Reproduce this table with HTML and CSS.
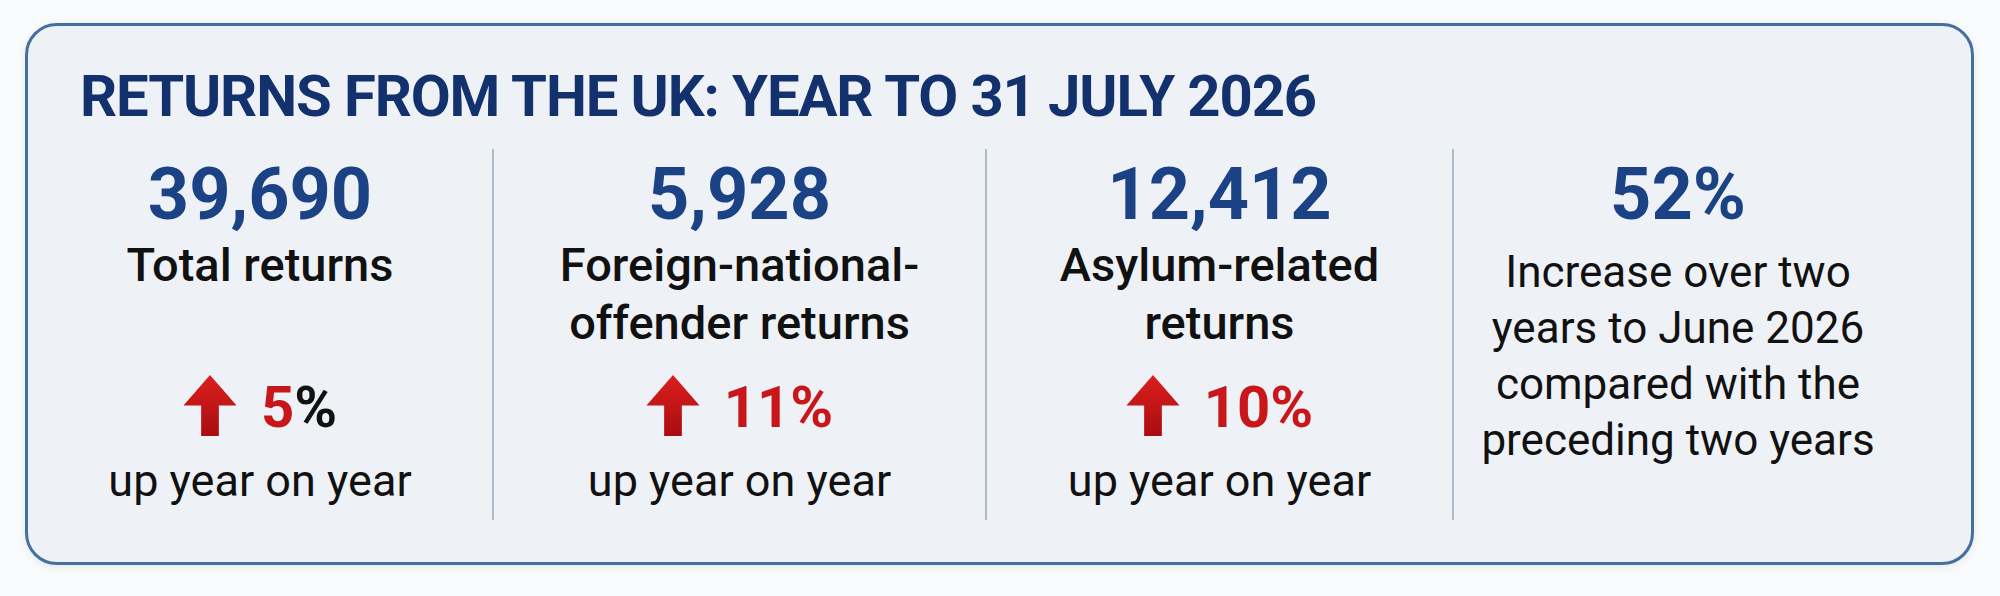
FILE: index.html
```html
<!DOCTYPE html>
<html lang="en">
<head>
<meta charset="utf-8">
<title>Returns from the UK</title>
<link rel="stylesheet" href="styles.css">
</head>
<body>
<section class="card">
  <h1 class="title">RETURNS FROM THE UK: YEAR TO 31 JULY 2026</h1>
  <div class="stats">
    <div class="stat stat-1">
      <div class="figure">39,690</div>
      <div class="label">Total returns</div>
      <div class="change">
        <svg class="arrow" viewBox="0 0 54 62" aria-hidden="true"><use href="#up"/></svg>
        <span class="pct"><span class="red">5</span>%</span>
      </div>
      <div class="note">up year on year</div>
    </div>
    <div class="stat stat-2">
      <div class="figure">5,928</div>
      <div class="label">Foreign-national-<br>offender returns</div>
      <div class="change">
        <svg class="arrow" viewBox="0 0 54 62" aria-hidden="true"><use href="#up"/></svg>
        <span class="pct red">11%</span>
      </div>
      <div class="note">up year on year</div>
    </div>
    <div class="stat stat-3">
      <div class="figure">12,412</div>
      <div class="label">Asylum-related<br>returns</div>
      <div class="change">
        <svg class="arrow" viewBox="0 0 54 62" aria-hidden="true"><use href="#up"/></svg>
        <span class="pct red">10%</span>
      </div>
      <div class="note">up year on year</div>
    </div>
    <div class="stat stat-4">
      <div class="figure">52%</div>
      <div class="desc">Increase over two<br>years to June 2026<br>compared with the<br>preceding two years</div>
    </div>
  </div>
</section>
<svg width="0" height="0" class="defs" aria-hidden="true">
  <defs>
    <linearGradient id="redgrad" x1="0" y1="0" x2="0" y2="1">
      <stop offset="0" stop-color="#dc1f1f"/>
      <stop offset="1" stop-color="#a90d0f"/>
    </linearGradient>
    <symbol id="up" viewBox="0 0 54 62">
      <polygon points="27,0 54,31 36,31 36,62 18,62 18,31 0,31" fill="url(#redgrad)"/>
    </symbol>
  </defs>
</svg>
</body>
</html>
```

FILE: styles.css
```css
html, body {
  margin: 0;
  padding: 0;
}

body {
  background: #fafbfc;
  font-family: Roboto, "Liberation Sans", Arial, sans-serif;
  color: #121212;
  width: 2000px;
  height: 596px;
  overflow: hidden;
}

.defs {
  position: absolute;
  width: 0;
  height: 0;
}

.card {
  margin: 23px 26px 0 25px;
  border: 3px solid #44709f;
  border-radius: 32px;
  background: #eef2f7;
  box-shadow: 0 2px 8px rgba(40, 60, 90, 0.10);
  padding: 41px 59px 42px 0;
}

.title {
  margin: 0 0 0 52px;
  font-size: 58px;
  line-height: 59px;
  font-weight: 700;
  color: #13316d;
  letter-spacing: -1.1px;
  white-space: nowrap;
}

.stats {
  margin-top: 23px;
  display: grid;
  grid-template-columns: 464px 493px 467px 1fr;
}

.stat {
  display: flex;
  flex-direction: column;
  align-items: center;
  text-align: center;
  padding: 10px 0 14px;
}

.stat + .stat {
  border-left: 2px solid #aebbcb;
}

.stat-4 {
  padding-right: 10px;
}

.figure {
  font-size: 72px;
  line-height: 72px;
  font-weight: 700;
  color: #1a4284;
}

.label {
  margin-top: 5px;
  font-size: 47px;
  line-height: 58px;
  font-weight: 500;
  height: 116px;
  color: #111;
}

.change {
  margin-top: 23px;
  height: 61px;
  display: flex;
  align-items: center;
  gap: 24px;
}

.arrow {
  width: 54px;
  height: 61px;
  display: block;
}

.pct {
  font-size: 58px;
  line-height: 61px;
  font-weight: 700;
  color: #111;
  padding-top: 4px;
}

.red {
  color: #c8161b;
}

.note {
  margin-top: 20px;
  font-size: 45px;
  line-height: 50px;
  font-weight: 400;
  color: #111;
}

.desc {
  margin-top: 13px;
  font-size: 44px;
  line-height: 56px;
  font-weight: 400;
  color: #111;
}
```
